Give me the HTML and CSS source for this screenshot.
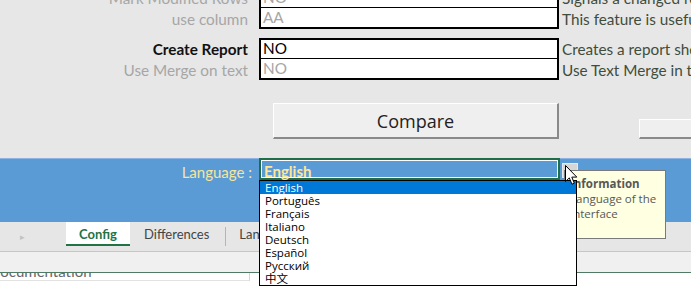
FILE: index.html
```html
<!DOCTYPE html>
<html lang="en">
<head>
    <meta charset="UTF-8">
    <title>Compare Config</title>
    <link rel="stylesheet" href="styles.css">
</head>
<body>
    <div class="sheet">
        <div class="field-group first-group">
            <div class="field-row">
                <span class="field-label muted">Mark Modified Rows</span>
                <span class="field-value muted">NO</span>
                <span class="field-desc">Signals a changed row</span>
            </div>
            <div class="field-row">
                <span class="field-label muted">use column</span>
                <span class="field-value muted">AA</span>
                <span class="field-desc">This feature is useful</span>
            </div>
        </div>
        <div class="field-group">
            <div class="field-row">
                <span class="field-label strong">Create Report</span>
                <span class="field-value">NO</span>
                <span class="field-desc">Creates a report sheet</span>
            </div>
            <div class="field-row">
                <span class="field-label muted">Use Merge on text</span>
                <span class="field-value muted">NO</span>
                <span class="field-desc">Use Text Merge in the</span>
            </div>
        </div>
        <div class="button-row">
            <button class="sheet-button compare-button">Compare</button>
            <button class="sheet-button side-button"></button>
        </div>
    </div>

    <div class="lang-band">
        <span class="lang-label">Language :</span>
        <div class="combo">
            <span class="combo-text">English</span>
            <ul class="combo-list">
                <li class="selected">English</li>
                <li>Português</li>
                <li>Français</li>
                <li>Italiano</li>
                <li>Deutsch</li>
                <li>Español</li>
                <li>Русский</li>
                <li>中文</li>
            </ul>
        </div>
        <span class="combo-arrow"></span>
        <div class="tooltip">
            <div class="tooltip-title">Information</div>
            <div>Language of the</div>
            <div>Interface</div>
        </div>
        <svg class="cursor" width="13" height="21" viewBox="0 0 13 21">
            <path d="M0.5 0.5 L0.5 16.5 L4.3 12.9 L6.9 19.2 L9.3 18.2 L6.8 12.1 L11.8 12.1 Z" fill="#fff" stroke="#000" stroke-width="1"/>
        </svg>
    </div>

    <div class="tab-bar">
        <span class="tab-scroll">&#9656;</span>
        <span class="tab active">Config</span>
        <span class="tab">Differences</span>
        <span class="tab-sep"></span>
        <span class="tab">Languages</span>
    </div>
    <div class="status-strip"></div>
    <div class="doc-area">
        <div class="doc-cell">Documentation</div>
    </div>
</body>
</html>
```

FILE: styles.css
```css
body {
    margin: 0;
    width: 691px;
    height: 296px;
    overflow: hidden;
    font-family: 'Lato', 'Liberation Sans', sans-serif;
    background: #ffffff;
}

.sheet {
    height: 158px;
    background: #e7e7e7;
    overflow: hidden;
}

.field-group {
    margin-top: 9px;
}

.first-group {
    margin-top: -13px;
}

.field-row {
    display: grid;
    grid-template-columns: 259px 300px 1fr;
    height: 21px;
    align-items: center;
    font-size: 15.3px;
    white-space: nowrap;
}

.field-label {
    text-align: right;
    padding-right: 11px;
    color: #333;
}

.field-label.muted {
    color: #a6a6a6;
}

.field-label.strong {
    font-weight: bold;
    color: #111;
}

.field-value {
    box-sizing: border-box;
    height: 100%;
    background: #ffffff;
    border-left: 2px solid #000;
    border-right: 2px solid #000;
    border-bottom: 1px solid #000;
    padding-left: 2px;
    line-height: 19px;
    color: #000;
}

.field-row:first-child .field-value {
    border-top: 2px solid #000;
    line-height: 17px;
}

.field-row:last-child .field-value {
    border-bottom: 2px solid #000;
}

.field-value.muted {
    color: #a6a6a6;
}

.field-desc {
    padding-left: 3px;
    color: #3f4d3c;
    overflow: hidden;
}

.button-row {
    display: flex;
    align-items: flex-end;
    gap: 80px;
    padding: 23px 0 0 273px;
}

.sheet-button {
    flex: none;
    box-sizing: border-box;
    background: #efefef;
    border: none;
    border-top: 1px solid #ffffff;
    border-left: 1px solid #ffffff;
    border-right: 2px solid #8a8a8a;
    border-bottom: 2px solid #8a8a8a;
    padding: 0;
    font-family: 'Open Sans', sans-serif;
    color: #222;
}

.compare-button {
    width: 286px;
    height: 36px;
    font-size: 18px;
}

.side-button {
    width: 120px;
    height: 20px;
}

.lang-band {
    position: relative;
    display: flex;
    align-items: flex-start;
    height: 64px;
    background: #5b9bd5;
    border-top: 1px solid #8db4e2;
    box-sizing: border-box;
}

.lang-label {
    width: 252px;
    text-align: right;
    padding-top: 4px;
    margin-right: 7px;
    font-size: 15px;
    color: #f4e5a0;
}

.combo {
    position: relative;
    box-sizing: border-box;
    width: 301px;
    height: 22px;
    margin-top: -1px;
    border: 2px solid #1f6e4a;
    box-shadow: inset 0 0 0 1px #ffffff;
    padding: 1px 0 0 3px;
    z-index: 2;
}

.combo-text {
    font-size: 15px;
    font-weight: bold;
    color: #ffe699;
}

.combo-list {
    position: absolute;
    top: 20px;
    left: -2px;
    width: 318px;
    box-sizing: border-box;
    margin: 0;
    padding: 0;
    list-style: none;
    background: #ffffff;
    border: 1px solid #000;
    font-family: 'Open Sans', 'Noto Sans CJK SC', sans-serif;
    font-size: 11.5px;
}

.combo-list li {
    height: 13px;
    line-height: 13px;
    padding-left: 5px;
    color: #000;
}

.combo-list li.selected {
    background: #0078d7;
    color: #ffffff;
}

.combo-arrow {
    width: 14px;
    height: 13px;
    margin: 4px 0 0 2px;
    background: #d6d6d6;
    border: 1px solid #e8e8e8;
}

.tooltip {
    position: absolute;
    left: 564px;
    top: 11px;
    width: 95px;
    height: 62px;
    padding: 5px 0 0 5px;
    background: #ffffe1;
    border: 1px solid #7a7a7a;
    font-family: 'Open Sans', sans-serif;
    font-size: 11.5px;
    line-height: 15px;
    color: #575757;
    z-index: 1;
}

.tooltip-title {
    font-weight: bold;
}

.cursor {
    position: absolute;
    left: 565px;
    top: 6px;
    z-index: 3;
}

.tab-bar {
    display: flex;
    align-items: flex-start;
    height: 30px;
    box-sizing: border-box;
    background: #e6e6e6;
    border-bottom: 1px solid #c6c6c6;
    font-size: 13px;
}

.tab-scroll {
    width: 66px;
    padding: 9px 0 0 20px;
    box-sizing: border-box;
    font-size: 9px;
    color: #c2c2c2;
}

.tab {
    height: 24px;
    line-height: 24px;
    padding: 0 10px;
    color: #444;
    white-space: nowrap;
}

.tab.active {
    width: 64px;
    box-sizing: border-box;
    text-align: center;
    margin-right: 4px;
    background: #ffffff;
    border-bottom: 2px solid #217346;
    font-weight: bold;
    color: #217346;
}

.tab-sep {
    width: 1px;
    height: 19px;
    margin: 5px 3px 0 6px;
    background: #b5b5b5;
}

.status-strip {
    height: 20px;
    background: #f0f0f0;
    border-bottom: 1px solid #4f7a64;
}

.doc-area {
    height: 22px;
    overflow: hidden;
    background: #ffffff;
}

.doc-cell {
    box-sizing: border-box;
    width: 261px;
    height: 20px;
    margin-left: -11px;
    margin-top: -12px;
    border-right: 1px solid #d4d4d4;
    border-bottom: 1px solid #e2e2e2;
    font-size: 15px;
    line-height: 20px;
    color: #666;
}
```
